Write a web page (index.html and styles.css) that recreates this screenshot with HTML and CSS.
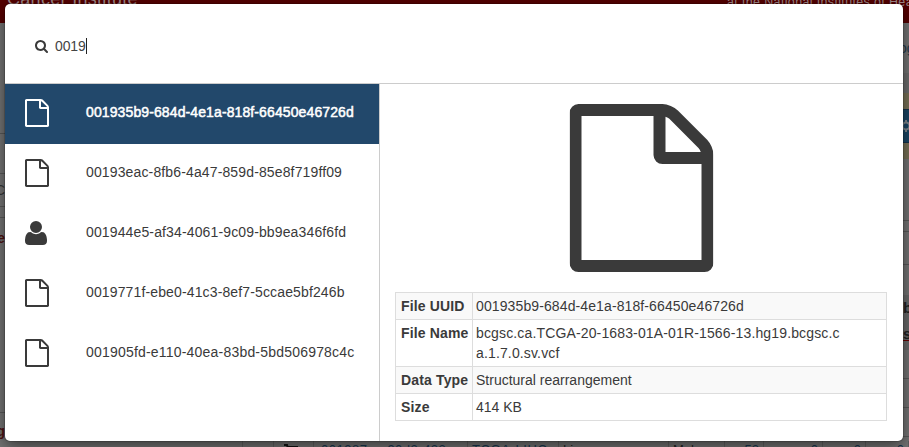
FILE: index.html
```html
<!DOCTYPE html>
<html lang="en">
<head>
<meta charset="utf-8">
<title>Quick Search</title>
<link rel="stylesheet" href="styles.css">
</head>
<body>
<svg class="defs" aria-hidden="true">
  <symbol id="file" viewBox="0 0 1536 1792"><path d="M1468 380q28 28 48 76t20 88v1152q0 40-28 68t-68 28H96q-40 0-68-28t-28-68V96q0-40 28-68T96 0h896q40 0 88 20t76 48zm-444-244v376h376q-10-29-22-41l-313-313q-12-12-41-22zm384 1528V640H992q-40 0-68-28t-28-68V128H128v1536z"/></symbol>
  <symbol id="user" viewBox="0 0 1408 1536"><path d="M1408 1277q0 120-73 189.5t-194 69.5H267q-121 0-194-69.5T0 1277q0-53 3.5-103.5t14-109T44 956t43-97.5 62-81 85.5-53.5T346 704q9 0 42 21.5t74.5 48T571 821t133 21.500 133-21.500 108.500-47.500 74.500-48 42-21.500q61 0 111.500 20t85.500 53.500 62 81 43 97.500 26.500 108.500 14 109 3.500 103.500zm-320-893q0 159-112.500 271.500T704 768 432.500 655.500 320 384t112.500-271.500T704 0t271.500 112.500T1088 384z"/></symbol>
  <symbol id="search" viewBox="0 0 1664 1664"><path d="M1152 704q0-185-131.500-316.500T704 256 387.500 387.500 256 704t131.500 316.500T704 1152t316.500-131.500T1152 704zm512 832q0 52-38 90t-90 38q-54 0-90-38l-343-342q-179 124-399 124-143 0-273.500-55.500t-225-150-150-225T0 704t55.500-273.500 150-225 225-150T704 0t273.500 55.500 225 150 150 225T1408 704q0 220-124 399l343 343q37 37 37 90z"/></symbol>
</svg>

<div class="page">
  <header class="banner"><span class="institute">Cancer Institute</span><span class="nih">at the National Institutes of Health</span></header>
  <div class="middle">
    <div class="strip">
      <div class="cell h50"></div>
      <div class="cell h61 line"></div>
      <div class="cell h40 line"></div>
      <div class="cell h33 line letter"><span>C</span></div>
      <div class="cell h11 line"></div>
      <div class="cell h195 line facet"><span>e</span></div>
      <div class="cell h28 facet last"><span>g</span></div>
    </div>
    <div class="strip">
      <div class="cell h50 login">og</div>
      <div class="cell h20 shade"></div>
      <div class="cell h16 olive"></div>
      <div class="cell h34 blue"><svg viewBox="0 0 12 12"><circle cx="6" cy="6" r="3.500" fill="none" stroke="#7d858b" stroke-width="2"/><path d="M6 0v2M6 10v2M0 6h2M10 6h2M2 2l1 1M9 9l1 1M10 2l-1 1M3 9l-1 1" stroke="#7d858b" stroke-width="2"/></svg></div>
      <div class="cell h16 olive"></div>
      <div class="cell h62 line"></div>
      <div class="cell h11 line"></div>
      <div class="cell h33 line"></div>
      <div class="cell h30"></div>
      <div class="cell h55 heads"><span>b</span><span class="u">s</span></div>
      <div class="cell h29 line"></div>
      <div class="cell h29 line"></div>
      <div class="cell h29 line"></div>
    </div>
  </div>
  <div class="results">
    <span></span><span></span><span class="cart"><svg viewBox="0 0 14 14"><path d="M0 1h3l2 7h7l2-5H4" fill="none" stroke="#111" stroke-width="2"/></svg></span><span class="link file-id">001987<b>-</b>90d2-423</span><span class="link project">TCGA-LIHC</span><span>Liver</span><span>Male</span><span class="link num">52</span><span class="link num">0</span><span class="link num">0</span><span class="link num">0</span>
  </div>
</div>

<main class="modal">
  <div class="query"><svg class="glass"><use href="#search"/></svg><span>0019</span><i class="caret"></i></div>
  <div class="content">
    <ul class="matches">
      <li class="active"><svg class="file"><use href="#file"/></svg><span>001935b9-684d-4e1a-818f-66450e46726d</span></li>
      <li><svg class="file"><use href="#file"/></svg><span>00193eac-8fb6-4a47-859d-85e8f719ff09</span></li>
      <li><svg class="user"><use href="#user"/></svg><span>001944e5-af34-4061-9c09-bb9ea346f6fd</span></li>
      <li><svg class="file"><use href="#file"/></svg><span>0019771f-ebe0-41c3-8ef7-5ccae5bf246b</span></li>
      <li><svg class="file"><use href="#file"/></svg><span class="wide">001905fd-e110-40ea-83bd-5bd506978c4c</span></li>
    </ul>
    <section class="detail">
      <svg class="big"><use href="#file"/></svg>
      <table>
        <tr><th>File UUID</th><td class="uuid">001935b9-684d-4e1a-818f-66450e46726d</td></tr>
        <tr><th>File Name</th><td class="name">bcgsc.ca.TCGA-20-1683-01A-01R-1566-13.hg19.bcgsc.c<br>a.1.7.0.sv.vcf</td></tr>
        <tr><th>Data Type</th><td>Structural rearrangement</td></tr>
        <tr><th>Size</th><td>414 KB</td></tr>
      </table>
    </section>
  </div>
</main>
</body>
</html>
```
FILE: styles.css
```css
* { box-sizing: border-box; }
body { margin: 0; height: 447px; overflow: hidden; position: relative; font: 14px/20px "Liberation Sans", Arial, sans-serif; color: #3a3a3a; background: #737373; }
.defs { display: none; }
svg { display: block; fill: currentColor; flex: none; }

.page { height: 447px; display: flex; flex-direction: column; overflow: hidden; }
.banner { height: 23px; flex: none; background: #540000; color: #9c8888; display: flex; justify-content: space-between; overflow: hidden; white-space: nowrap; }
.institute { font-size: 18px; letter-spacing: .3px; line-height: 20px; margin: -11px 0 0 7px; }
.nih { font-size: 12.500px; letter-spacing: .35px; width: 182px; margin-top: -8px; }
.middle { height: 418px; display: flex; justify-content: space-between; flex: none; }
.strip { width: 6px; overflow: hidden; }
.cell { overflow: hidden; background: #737373; }
.line { border-bottom: 1px solid #585858; }
.h11 { height: 11px; } .h16 { height: 16px; } .h20 { height: 20px; } .h28 { height: 28px; }
.h29 { height: 29px; } .h30 { height: 30px; } .h33 { height: 33px; } .h34 { height: 34px; }
.h40 { height: 40px; } .h50 { height: 50px; } .h55 { height: 55px; } .h61 { height: 61px; }
.h62 { height: 62px; } .h195 { height: 195px; }
.shade { background: #6c6c6c; }
.olive { background: #777056; }
.blue { background: #194463; border: solid #12304a; border-width: 1px 0; padding-top: 10px; }
.blue svg { width: 12px; height: 12px; margin-left: -3px; }
.login { padding-top: 15px; color: #253a4a; text-indent: -4px; }
.letter { display: flex; justify-content: flex-end; padding: 6px 1px 0 0; color: #333; }
.facet { display: flex; justify-content: flex-end; padding: 10px 1px 0 0; color: #4c1111; font-weight: bold; }
.last { padding-top: 8px; }
.heads { background: #686868; font-weight: bold; font-size: 15px; color: #222; padding-top: 3px; }
.heads span { display: block; height: 26px; }
.u { text-decoration: underline; text-decoration-color: #600; }
.results { height: 20px; flex: none; display: grid; grid-template-columns: 243px 31px 40px 154px 91px 110px 56px 39px 59px 43px 43px; font-size: 13px; line-height: 18px; color: #222; }
.results span { border-right: 1px solid #606060; padding: 0 4px; overflow: hidden; white-space: nowrap; background: #737373; }
.results .link { color: #17364f; }
.results .num { text-align: right; }
.results .file-id { padding-left: 7px; letter-spacing: .5px; }
.file-id b { display: inline-block; width: 20px; text-align: center; font-weight: normal; }
.results .project { letter-spacing: .6px; }
.results .cart { padding-left: 10px; }
.cart svg { width: 14px; height: 14px; margin-top: 3px; }

.modal { position: absolute; left: 5px; top: 4px; width: 898px; height: 437px; background: #fff; border-radius: 5px; box-shadow: 0 5px 15px rgba(0,0,0,.5), 0 0 0 1px rgba(0,0,0,.15); overflow: hidden; }
.query { height: 80px; border-bottom: 1px solid #ccc; display: flex; align-items: center; padding: 5px 0 0 30px; }
.glass { width: 13px; height: 13px; margin-right: 7px; }
.query span { letter-spacing: -.100px; color: #444; }
.caret { width: 1px; height: 16px; background: #222; }
.content { display: flex; height: 357px; }
.matches { width: 375px; border-right: 1px solid #ccc; margin: 0; padding: 0; list-style: none; }
.matches li { height: 60px; padding: 15px 0 0 20px; display: grid; grid-template-columns: 61px 1fr; }
.matches li span { line-height: 26px; letter-spacing: .135px; }
.matches li .wide { letter-spacing: .200px; }
.matches .active { background: #22486b; color: #fff; -webkit-text-stroke: .5px #fff; }
.matches .active span { letter-spacing: .110px; }
.file { width: 24px; height: 28px; }
.user { width: 22px; height: 24px; margin-top: 2px; }
.detail { flex: 1; padding: 20px 16px 0 15px; }
.big { width: 144px; height: 168px; margin: 0 auto 20px; transform: translateX(.5px); }
table { width: 492px; border-collapse: collapse; table-layout: fixed; }
th, td { border: 1px solid #ddd; padding: 3px; text-align: left; vertical-align: top; }
th { width: 77px; padding: 3px 0 3px 5px; white-space: nowrap; letter-spacing: .150px; }
tr:nth-child(odd) { background: #f9f9f9; }
.uuid { letter-spacing: .110px; }
.name { letter-spacing: .145px; }
```
